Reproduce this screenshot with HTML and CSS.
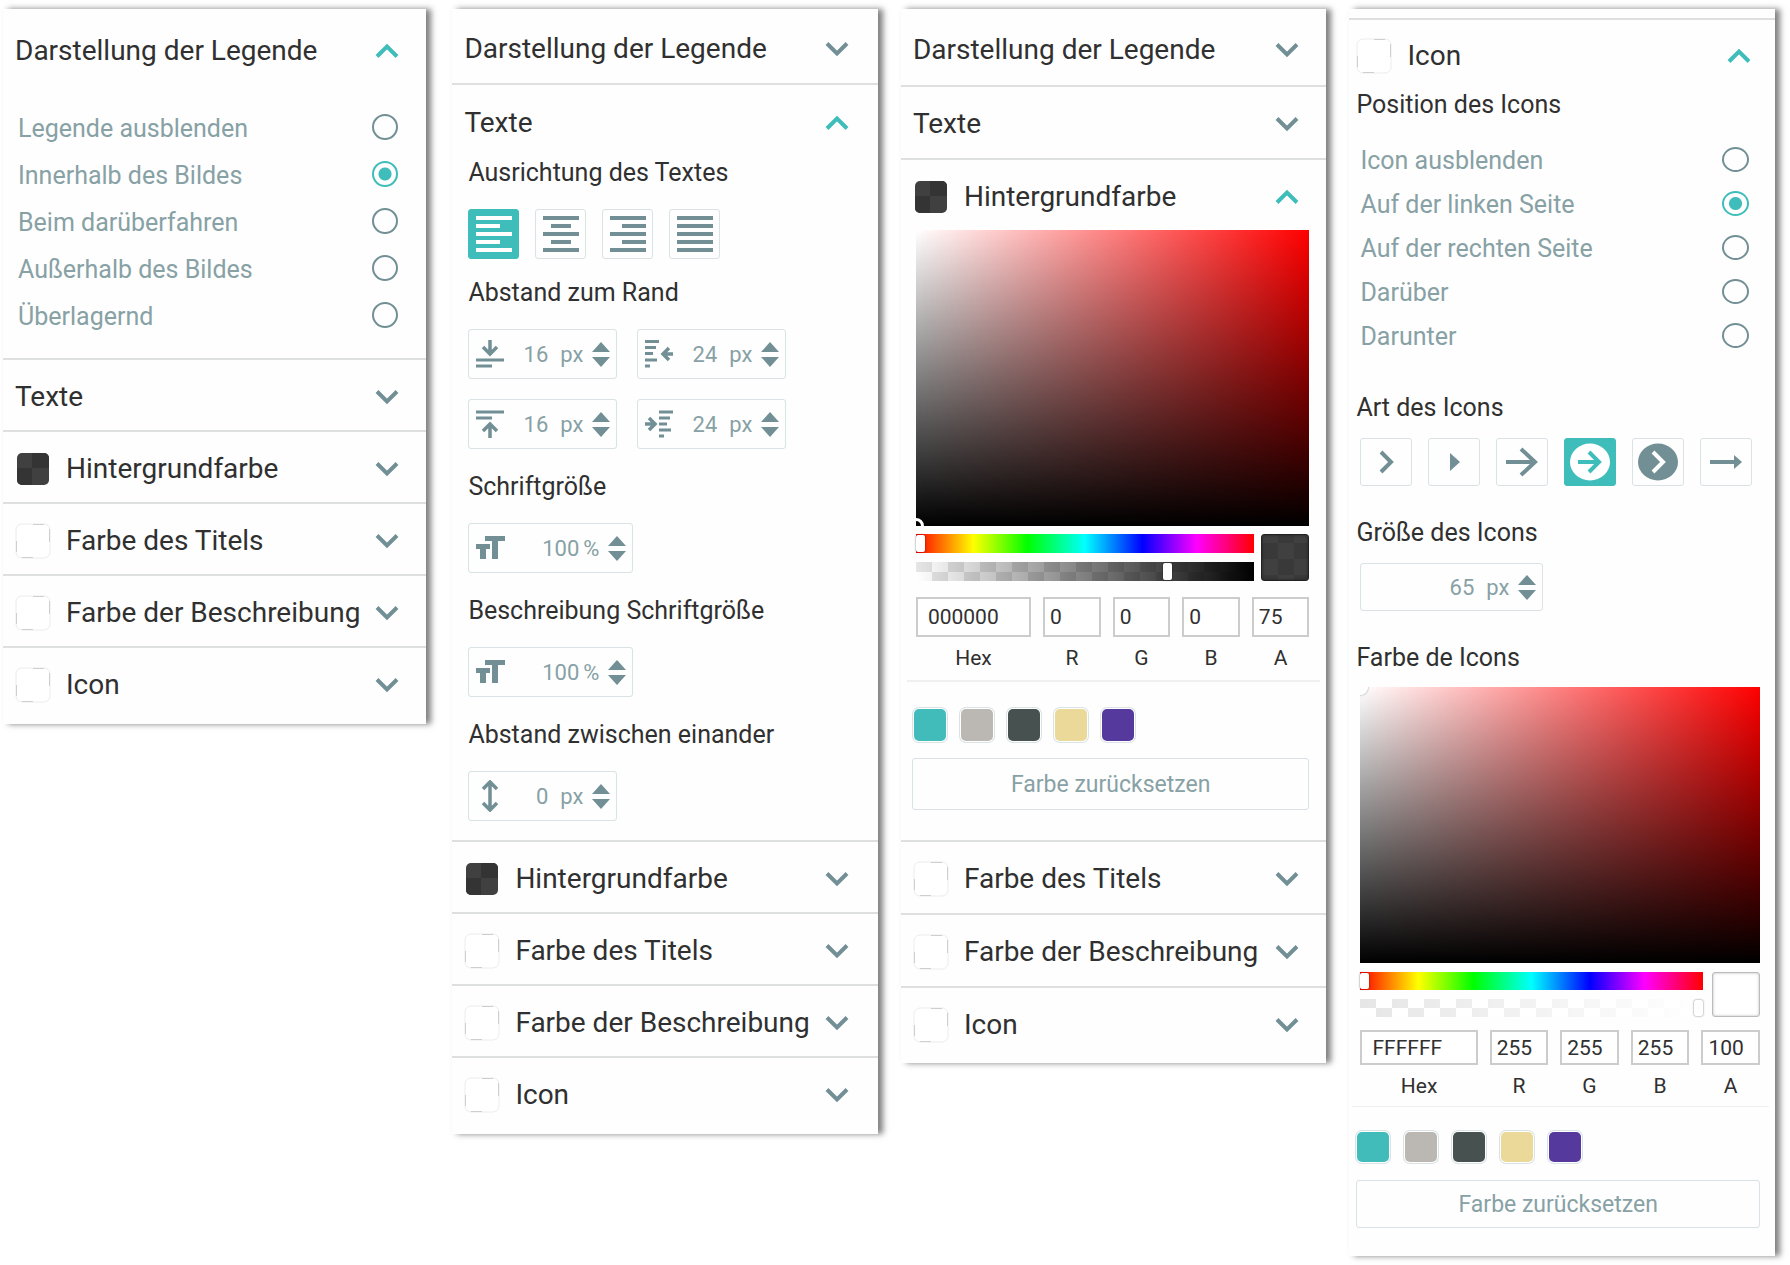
FILE: index.html
```html
<!DOCTYPE html>
<html lang="de">
<head>
<meta charset="utf-8">
<meta name="viewport" content="width=device-width, initial-scale=1">
<title>Einstellungen der Legende</title>
<link rel="stylesheet" href="styles.css">
</head>
<body>
<svg class="sprite" aria-hidden="true">
  <symbol id="down" viewBox="0 0 24 16"><path d="M2 2.500l10 10 10-10" fill="none" stroke="currentColor" stroke-width="4"/></symbol>
  <symbol id="up" viewBox="0 0 24 16"><path d="M2 13.500l10-10 10 10" fill="none" stroke="currentColor" stroke-width="4"/></symbol>
  <symbol id="white" viewBox="0 0 36 36"><rect x="1" y="1" width="34" height="34" rx="6" fill="#fff" stroke="#ececec"/><path d="M18 1.500h11M34.500 6v13M1.500 18v11M7 34.500h11" stroke="#cfcfcf" fill="none"/></symbol>
  <symbol id="dark" viewBox="0 0 36 36"><rect x="2" y="2" width="32" height="32" rx="5" fill="#404040"/><path d="M17 2h12a5 5 0 0 1 5 5v10H17zM2 17h15v17H7a5 5 0 0 1-5-5z" fill="#343434"/></symbol>
  <symbol id="step-up" viewBox="0 0 18 10"><path d="M0 10L9 0l9 10z" fill="currentColor"/></symbol>
  <symbol id="step-down" viewBox="0 0 18 10"><path d="M0 0l9 10 9-10z" fill="currentColor"/></symbol>
  <symbol id="tt" viewBox="0 0 30 24"><path d="M9 0h20v5h-7v18h-6V5H9zM0 8h14v5h-4v10H4V13H0z" fill="currentColor"/></symbol>
</svg>
<main class="board">

  <section class="panel panel-legend">
    <button class="head head-first" type="button"><span>Darstellung der Legende</span><svg class="chev open"><use href="#up"/></svg></button>
    <fieldset class="radios">
      <label>Legende ausblenden<input type="radio" name="legend"></label>
      <label>Innerhalb des Bildes<input type="radio" name="legend" checked></label>
      <label>Beim darüberfahren<input type="radio" name="legend"></label>
      <label>Außerhalb des Bildes<input type="radio" name="legend"></label>
      <label>Überlagernd<input type="radio" name="legend"></label>
    </fieldset>
    <button class="head line" type="button"><span>Texte</span><svg class="chev"><use href="#down"/></svg></button>
    <button class="head line" type="button"><svg class="sw"><use href="#dark"/></svg><span>Hintergrundfarbe</span><svg class="chev"><use href="#down"/></svg></button>
    <button class="head line" type="button"><svg class="sw"><use href="#white"/></svg><span>Farbe des Titels</span><svg class="chev"><use href="#down"/></svg></button>
    <button class="head line" type="button"><svg class="sw"><use href="#white"/></svg><span>Farbe der Beschreibung</span><svg class="chev"><use href="#down"/></svg></button>
    <button class="head line" type="button"><svg class="sw"><use href="#white"/></svg><span>Icon</span><svg class="chev"><use href="#down"/></svg></button>
  </section>

  <section class="panel panel-text">
    <button class="head" type="button"><span>Darstellung der Legende</span><svg class="chev"><use href="#down"/></svg></button>
    <button class="head line" type="button"><span>Texte</span><svg class="chev open"><use href="#up"/></svg></button>
    <div class="groups">
      <div class="group group-align">
        <h3>Ausrichtung des Textes</h3>
        <div class="row">
          <button class="tool on" type="button" aria-label="Linksbündig"><svg width="36" height="36"><path d="M0 2h36M0 10h24M0 18h36M0 26h24M0 34h36" stroke="currentColor" stroke-width="4"/></svg></button>
          <button class="tool" type="button" aria-label="Zentriert"><svg width="36" height="36"><path d="M0 2h36M8 10h20M0 18h36M8 26h20M0 34h36" stroke="currentColor" stroke-width="4"/></svg></button>
          <button class="tool" type="button" aria-label="Rechtsbündig"><svg width="36" height="36"><path d="M0 2h36M12 10h24M0 18h36M12 26h24M0 34h36" stroke="currentColor" stroke-width="4"/></svg></button>
          <button class="tool" type="button" aria-label="Blocksatz"><svg width="36" height="36"><path d="M0 2h36M0 10h36M0 18h36M0 26h36M0 34h36" stroke="currentColor" stroke-width="4"/></svg></button>
        </div>
      </div>
      <div class="group">
        <h3>Abstand zum Rand</h3>
        <div class="fields">
          <div class="num"><svg width="28" height="28"><path d="M14 0v13M7 7l7 7 7-7" fill="none" stroke="currentColor" stroke-width="3.500"/><path d="M0 20h28M0 26h16" stroke="currentColor" stroke-width="3"/></svg><input type="number" value="16" aria-label="Abstand unten"><span class="unit">px</span><span class="steps"><button type="button" aria-label="Mehr"><svg><use href="#step-up"/></svg></button><button type="button" aria-label="Weniger"><svg><use href="#step-down"/></svg></button></span></div>
          <div class="num"><svg width="28" height="28"><path d="M0 1.500h14M0 7.500h11M0 13.500h8M0 20h12M0 26h5" stroke="currentColor" stroke-width="3"/><path d="M28 14H18M24 8l-6 6 6 6" fill="none" stroke="currentColor" stroke-width="3.500"/></svg><input type="number" value="24" aria-label="Abstand rechts"><span class="unit">px</span><span class="steps"><button type="button" aria-label="Mehr"><svg><use href="#step-up"/></svg></button><button type="button" aria-label="Weniger"><svg><use href="#step-down"/></svg></button></span></div>
          <div class="num"><svg width="28" height="28"><path d="M0 2h28M0 8h16" stroke="currentColor" stroke-width="3"/><path d="M14 28V15M7 21l7-7 7 7" fill="none" stroke="currentColor" stroke-width="3.500"/></svg><input type="number" value="16" aria-label="Abstand oben"><span class="unit">px</span><span class="steps"><button type="button" aria-label="Mehr"><svg><use href="#step-up"/></svg></button><button type="button" aria-label="Weniger"><svg><use href="#step-down"/></svg></button></span></div>
          <div class="num"><svg width="28" height="28"><path d="M14 2h14M14 8h11M14 14h8M14 20h12M14 26h5" stroke="currentColor" stroke-width="3"/><path d="M0 14h10M4 8l6 6-6 6" fill="none" stroke="currentColor" stroke-width="3.500"/></svg><input type="number" value="24" aria-label="Abstand links"><span class="unit">px</span><span class="steps"><button type="button" aria-label="Mehr"><svg><use href="#step-up"/></svg></button><button type="button" aria-label="Weniger"><svg><use href="#step-down"/></svg></button></span></div>
        </div>
      </div>
      <div class="group">
        <h3><label for="size">Schriftgröße</label></h3>
        <div class="num num-pct"><svg width="30" height="24"><use href="#tt"/></svg><input id="size" type="number" value="100"><span class="unit">%</span><span class="steps"><button type="button" aria-label="Mehr"><svg><use href="#step-up"/></svg></button><button type="button" aria-label="Weniger"><svg><use href="#step-down"/></svg></button></span></div>
      </div>
      <div class="group">
        <h3><label for="dsize">Beschreibung Schriftgröße</label></h3>
        <div class="num num-pct"><svg width="30" height="24"><use href="#tt"/></svg><input id="dsize" type="number" value="100"><span class="unit">%</span><span class="steps"><button type="button" aria-label="Mehr"><svg><use href="#step-up"/></svg></button><button type="button" aria-label="Weniger"><svg><use href="#step-down"/></svg></button></span></div>
      </div>
      <div class="group">
        <h3><label for="between">Abstand zwischen einander</label></h3>
        <div class="num"><svg width="28" height="32"><path d="M14 2v28M7 9l7-7 7 7M7 23l7 7 7-7" fill="none" stroke="currentColor" stroke-width="3.500"/></svg><input id="between" type="number" value="0"><span class="unit">px</span><span class="steps"><button type="button" aria-label="Mehr"><svg><use href="#step-up"/></svg></button><button type="button" aria-label="Weniger"><svg><use href="#step-down"/></svg></button></span></div>
      </div>
    </div>
    <button class="head line" type="button"><svg class="sw"><use href="#dark"/></svg><span>Hintergrundfarbe</span><svg class="chev"><use href="#down"/></svg></button>
    <button class="head line" type="button"><svg class="sw"><use href="#white"/></svg><span>Farbe des Titels</span><svg class="chev"><use href="#down"/></svg></button>
    <button class="head line" type="button"><svg class="sw"><use href="#white"/></svg><span>Farbe der Beschreibung</span><svg class="chev"><use href="#down"/></svg></button>
    <button class="head line" type="button"><svg class="sw"><use href="#white"/></svg><span>Icon</span><svg class="chev"><use href="#down"/></svg></button>
  </section>

  <section class="panel panel-color">
    <button class="head" type="button"><span>Darstellung der Legende</span><svg class="chev"><use href="#down"/></svg></button>
    <button class="head line" type="button"><span>Texte</span><svg class="chev"><use href="#down"/></svg></button>
    <button class="head line" type="button"><svg class="sw"><use href="#dark"/></svg><span>Hintergrundfarbe</span><svg class="chev open"><use href="#up"/></svg></button>
    <div class="picker">
      <div class="shade"><i class="knob knob-black"></i></div>
      <div class="mix">
        <div class="sliders">
          <input class="range hue" type="range" min="0" max="360" value="0" aria-label="Farbton">
          <input class="range alpha-black" type="range" min="0" max="100" value="75" aria-label="Deckkraft">
        </div>
        <div class="preview preview-black"></div>
      </div>
      <div class="values">
        <label><input type="text" value="000000">Hex</label>
        <label><input type="text" value="0">R</label>
        <label><input type="text" value="0">G</label>
        <label><input type="text" value="0">B</label>
        <label><input type="text" value="75">A</label>
      </div>
    </div>
    <div class="palette">
      <button class="c1" type="button" aria-label="Türkis"></button><button class="c2" type="button" aria-label="Grau"></button><button class="c3" type="button" aria-label="Anthrazit"></button><button class="c4" type="button" aria-label="Sand"></button><button class="c5" type="button" aria-label="Violett"></button>
    </div>
    <button class="reset" type="button">Farbe zurücksetzen</button>
    <button class="head line" type="button"><svg class="sw"><use href="#white"/></svg><span>Farbe des Titels</span><svg class="chev"><use href="#down"/></svg></button>
    <button class="head line" type="button"><svg class="sw"><use href="#white"/></svg><span>Farbe der Beschreibung</span><svg class="chev"><use href="#down"/></svg></button>
    <button class="head line" type="button"><svg class="sw"><use href="#white"/></svg><span>Icon</span><svg class="chev"><use href="#down"/></svg></button>
  </section>

  <section class="panel panel-icon">
    <button class="head line" type="button"><svg class="sw"><use href="#white"/></svg><span>Icon</span><svg class="chev open"><use href="#up"/></svg></button>
    <h3>Position des Icons</h3>
    <fieldset class="radios">
      <label>Icon ausblenden<input type="radio" name="icon"></label>
      <label>Auf der linken Seite<input type="radio" name="icon" checked></label>
      <label>Auf der rechten Seite<input type="radio" name="icon"></label>
      <label>Darüber<input type="radio" name="icon"></label>
      <label>Darunter<input type="radio" name="icon"></label>
    </fieldset>
    <h3>Art des Icons</h3>
    <div class="row">
      <button class="tool" type="button" aria-label="Winkel"><svg width="42" height="38"><path d="M16 9l10 10-10 10" fill="none" stroke="currentColor" stroke-width="4"/></svg></button>
      <button class="tool" type="button" aria-label="Dreieck"><svg width="42" height="38"><path d="M17 10l10 9-10 9z" fill="currentColor"/></svg></button>
      <button class="tool" type="button" aria-label="Pfeil"><svg width="42" height="38"><path d="M5 19h29M20 6l14 13-14 13" fill="none" stroke="currentColor" stroke-width="4"/></svg></button>
      <button class="tool on" type="button" aria-label="Pfeil im Kreis"><svg width="42" height="38"><ellipse cx="21" cy="19" rx="20" ry="18.500" fill="#fff"/><path d="M9 19h21M20 9l10 10-10 10" fill="none" stroke="#3fbdba" stroke-width="4"/></svg></button>
      <button class="tool" type="button" aria-label="Winkel im Kreis"><svg width="42" height="38"><ellipse cx="21" cy="19" rx="20" ry="18.500" fill="currentColor"/><path d="M16 9l10 10-10 10" fill="none" stroke="#fff" stroke-width="4"/></svg></button>
      <button class="tool" type="button" aria-label="Schmaler Pfeil"><svg width="42" height="38"><path d="M5 19h25" stroke="currentColor" stroke-width="4"/><path d="M29 12l8 7-8 7z" fill="currentColor"/></svg></button>
    </div>
    <h3><label for="isize">Größe des Icons</label></h3>
    <div class="num"><input id="isize" type="number" value="65"><span class="unit">px</span><span class="steps"><button type="button" aria-label="Mehr"><svg><use href="#step-up"/></svg></button><button type="button" aria-label="Weniger"><svg><use href="#step-down"/></svg></button></span></div>
    <h3>Farbe de Icons</h3>
    <div class="picker">
      <div class="shade"><i class="knob knob-white"></i></div>
      <div class="mix">
        <div class="sliders">
          <input class="range hue" type="range" min="0" max="360" value="0" aria-label="Farbton">
          <input class="range alpha-white" type="range" min="0" max="100" value="100" aria-label="Deckkraft">
        </div>
        <div class="preview"></div>
      </div>
      <div class="values">
        <label><input type="text" value="FFFFFF">Hex</label>
        <label><input type="text" value="255">R</label>
        <label><input type="text" value="255">G</label>
        <label><input type="text" value="255">B</label>
        <label><input type="text" value="100">A</label>
      </div>
    </div>
    <div class="palette">
      <button class="c1" type="button" aria-label="Türkis"></button><button class="c2" type="button" aria-label="Grau"></button><button class="c3" type="button" aria-label="Anthrazit"></button><button class="c4" type="button" aria-label="Sand"></button><button class="c5" type="button" aria-label="Violett"></button>
    </div>
    <button class="reset" type="button">Farbe zurücksetzen</button>
  </section>

</main>
</body>
</html>
```
FILE: styles.css
```css
:root {
  --teal: #3fbdba;
  --slate: #718f94;
  --muted: #87a1a5;
  --ink: #303030;
  --edge: #d9e2e4;
}
* { box-sizing: border-box; }
body {
  margin: 0;
  background: #fff;
  color: var(--ink);
  font-family: Roboto, "Liberation Sans", sans-serif;
}
button, input { font: inherit; color: inherit; margin: 0; }
button { background: none; border: 0; padding: 0; }
.sprite { display: none; }

.board {
  display: grid;
  grid-template-columns: repeat(4, 1fr);
  align-items: start;
  gap: 23px;
  padding: 9px 15px 9px 3px;
}
.panel {
  display: flex;
  flex-direction: column;
  padding-bottom: 6px;
  background: #fefefe;
  box-shadow: 5px 0 6px rgba(0, 0, 0, .5);
}
.panel-legend { margin-right: 3px; }

/* accordion rows */
.head {
  display: flex;
  align-items: center;
  gap: 15px;
  width: 100%;
  min-height: 72px;
  padding: 5px 27px 0 12px;
  font-size: 28px;
  line-height: 32px;
  text-align: left;
  white-space: nowrap;
}
.head-first { min-height: 84px; padding-top: 0; }
.line { border-top: 2px solid #dedfdf; padding-top: 3px; }
.chev { width: 24px; height: 16px; margin-left: auto; flex: none; color: var(--slate); }
.chev.open { color: var(--teal); }
.sw { width: 36px; height: 36px; flex: none; }

/* radio lists */
.radios {
  margin: 0;
  border: 0;
  padding: 11px 28px 19px 15px;
  color: var(--muted);
  font-size: 25px;
  line-height: 45px;
}
.radios label { display: flex; align-items: center; justify-content: space-between; padding-top: 2px; }
.radios input {
  appearance: none;
  width: 26px;
  height: 26px;
  margin-bottom: 4px;
  border: 2px solid var(--slate);
  border-radius: 50%;
}
.radios input:checked {
  border-color: var(--teal);
  background: radial-gradient(circle, var(--teal) 6px, transparent 7px);
}

/* text settings */
.panel-text .head { padding-right: 29px; }
.panel-text .head:first-child, .panel-text .head:nth-child(2) { min-height: 74px; }
h3 { margin: 0; font-size: 25px; font-weight: 400; line-height: 32px; }
.groups { display: flex; flex-direction: column; gap: 22px; padding: 0 16px 19px; }
.group { display: flex; flex-direction: column; gap: 20px; }
.group-align { margin-bottom: -4px; }
.row { display: flex; gap: 16px; }
.tool {
  display: flex;
  align-items: center;
  justify-content: center;
  width: 51px;
  height: 50px;
  border: 1px solid var(--edge);
  border-radius: 3px;
  color: var(--slate);
}
.tool.on { background: var(--teal); border-color: var(--teal); color: #fff; }
.fields { display: grid; grid-template-columns: 149px 149px; gap: 20px; }
.num {
  display: flex;
  align-items: center;
  width: 149px;
  height: 50px;
  padding: 0 6px 0 7px;
  border: 1px solid var(--edge);
  border-radius: 3px;
  color: var(--slate);
  font-size: 22px;
}
.num > svg { flex: none; }
.num input {
  flex: 1;
  min-width: 0;
  width: 0;
  border: 0;
  padding: 0;
  background: none;
  color: var(--muted);
  text-align: right;
  appearance: textfield;
}
.num input::-webkit-inner-spin-button { appearance: none; }
.unit { margin: 0 9px 0 12px; color: var(--muted); }
.num-pct { width: 165px; }
.num-pct .unit { margin-left: 4px; }
.steps { display: flex; flex-direction: column; gap: 5px; }
.steps button { display: flex; }
.steps svg { width: 18px; height: 10px; }

/* colour picker */
.picker { padding: 0 17px 10px 15px; }
.shade {
  position: relative;
  height: 296px;
  overflow: hidden;
  background: linear-gradient(to top, #000, transparent), linear-gradient(to right, #fff, red);
}
.knob { position: absolute; width: 16px; height: 16px; border: 3px solid #fff; border-radius: 50%; }
.knob-black { left: -8px; bottom: -8px; }
.knob-white { left: -8px; top: -8px; box-shadow: 0 0 2px #777; }
.mix { display: flex; gap: 7px; margin-top: 8px; }
.sliders { display: flex; flex: 1; flex-direction: column; gap: 9px; }
.range { appearance: none; display: block; width: 100%; height: 19px; }
.range::-webkit-slider-thumb {
  appearance: none;
  width: 9px;
  height: 17px;
  border-radius: 2px;
  background: #fff;
  box-shadow: 0 0 2px rgba(0, 0, 0, .6);
}
.hue { background: linear-gradient(to right, red, #ff0 17%, lime 33%, cyan 50%, blue 67%, magenta 83%, red); }
.alpha-black {
  background: linear-gradient(to right, transparent, #000), repeating-conic-gradient(#fff 0 25%, #e6e6e6 0 50%) 0 0 / 32px 20px;
}
.alpha-white {
  background: linear-gradient(to right, transparent, #fff), repeating-conic-gradient(#fff 0 25%, #e6e6e6 0 50%) 0 0 / 32px 18px;
}
.preview {
  width: 48px;
  border: 1px solid #bbb;
  border-radius: 3px;
  background: #fff;
  box-shadow: inset 0 0 3px #bbb;
}
.preview-black {
  border-color: #222;
  box-shadow: inset 0 0 3px #222;
  background: repeating-conic-gradient(#404040 0 25%, #393939 0 50%) 0 8px / 32px 32px;
}
.values {
  display: grid;
  grid-template-columns: 2fr 1fr 1fr 1fr 1fr;
  gap: 12px;
  margin-top: 16px;
  font-size: 21px;
  line-height: 24px;
  text-align: center;
}
.values label { display: flex; flex-direction: column; gap: 9px; min-width: 0; }
.values input {
  width: 100%;
  height: 40px;
  padding: 0 5px;
  border: 2px solid #ccc;
  background: #fff;
}
.values label:first-child input { padding-left: 10px; }
.palette {
  display: flex;
  gap: 15px;
  margin: 0 6px;
  padding: 27px 0 17px 7px;
  border-top: 2px solid #f0f0f0;
}
.palette button {
  width: 32px;
  height: 32px;
  border-radius: 5px;
  box-shadow: 0 0 0 1px #fff, 0 0 0 2px var(--edge);
}
.c1 { background: #41bcba; }
.c2 { background: #bbb8b4; }
.c3 { background: #475150; }
.c4 { background: #ead998; }
.c5 { background: #55399c; }
.reset {
  height: 52px;
  margin: 0 17px 30px 11px;
  border: 1px solid var(--edge);
  border-radius: 3px;
  color: var(--muted);
  font-size: 23px;
}
.panel-color { padding-bottom: 4px; }
.panel-color .head { min-height: 73px; }
.panel-color .head:first-child { min-height: 76px; }
.panel-color .head:nth-child(3) { min-height: 72px; }

/* denser panel with the icon settings */
.panel-icon { padding-top: 9px; padding-bottom: 0; }
.panel-icon .head { padding: 2px 24px 0 7px; min-height: 71px; }
.panel-icon h3 { margin-left: 7px; }
.panel-icon .radios { padding: 17px 26px 34px 11px; line-height: 42px; }
.panel-icon .radios input { width: 27px; height: 25px; }
.panel-icon .row, .panel-icon .num { margin: 14px 11px 31px; }
.panel-icon .tool { width: 52px; height: 48px; }
.panel-icon .num { width: 183px; height: 48px; }
.panel-icon .picker { padding: 13px 15px 8px 11px; }
.panel-icon .shade { height: 276px; }
.panel-icon .mix { margin-top: 9px; gap: 9px; }
.panel-icon .range { height: 18px; }
.panel-icon .range::-webkit-slider-thumb { height: 16px; }
.panel-icon .values { margin-top: 13px; }
.panel-icon .values input { height: 35px; }
.panel-icon .palette { border-top-width: 1px; margin-left: 3px; padding: 25px 0 18px 5px; gap: 16px; }
.panel-icon .palette button { height: 30px; }
.panel-icon .reset { height: 48px; margin: 0 15px 28px 7px; }
```
